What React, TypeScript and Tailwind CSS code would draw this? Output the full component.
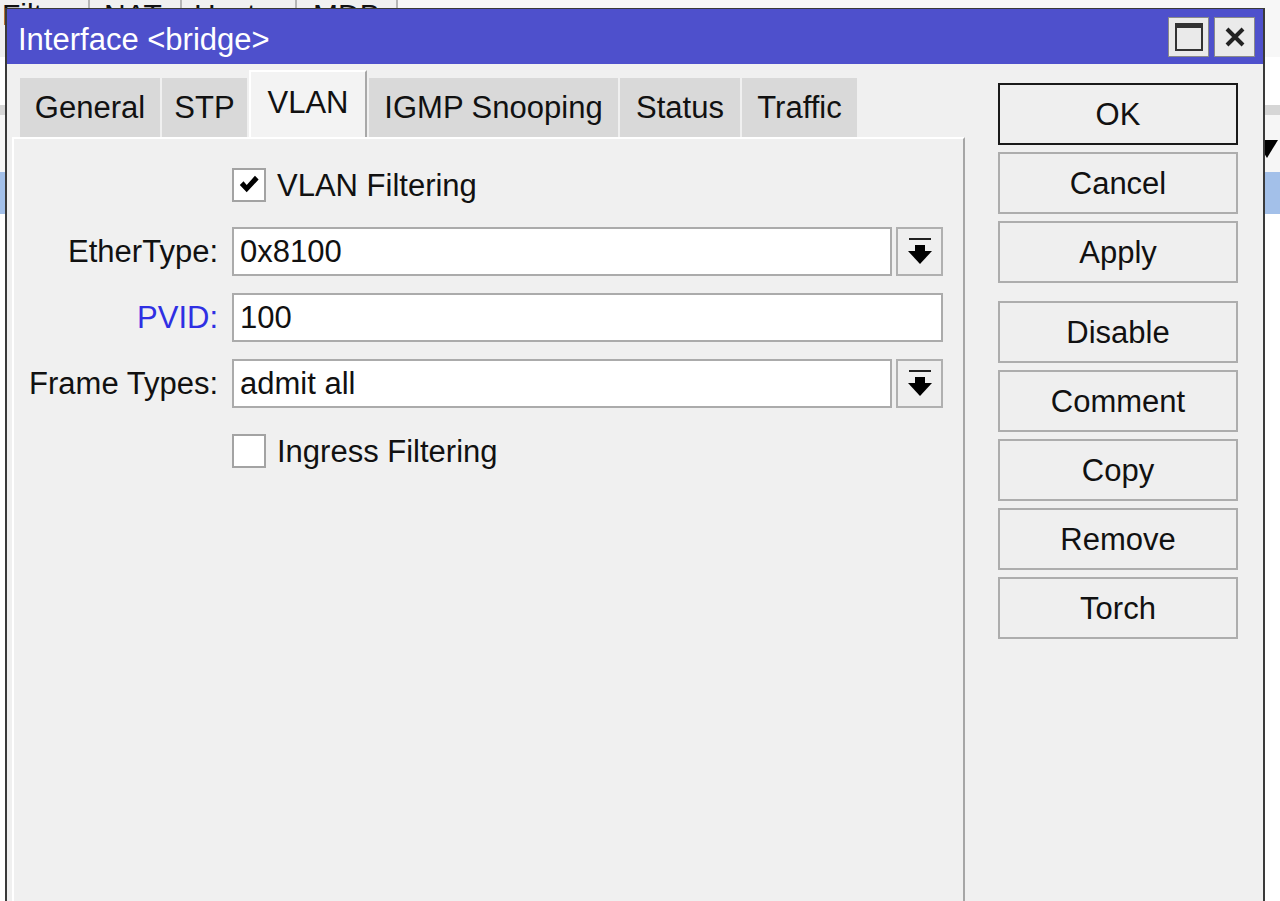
import React from "react";

const tabs = [
  { name: "General", w: "w-[140px]" },
  { name: "STP", w: "w-[85px]" },
  { name: "VLAN", w: "w-[118px]", active: true },
  { name: "IGMP Snooping", w: "w-[249px]" },
  { name: "Status", w: "w-[120px]" },
  { name: "Traffic", w: "w-[115px]" },
];

const actions = ["OK", "Cancel", "Apply", "Disable", "Comment", "Copy", "Remove", "Torch"];

function CheckBox({ checked, label }: { checked?: boolean; label: string }) {
  return (
    <div className="flex items-center pl-[218px] h-[34px]">
      <div className="w-[34px] h-[34px] border-2 border-[#a3a3a3] bg-white flex items-center justify-center">
        {checked && (
          <svg width="22" height="22" viewBox="0 0 24 24">
            <polygon points="2,12 6,8 9.5,12 18.5,2 22.5,6 9.5,20" fill="#000" />
          </svg>
        )}
      </div>
      <span className="ml-[11px] text-[31px] leading-none text-[#111]">{label}</span>
    </div>
  );
}

function DropIcon() {
  return (
    <svg width="24" height="27" viewBox="0 0 24 27">
      <rect x="1" y="0" width="22" height="2" fill="#222" />
      <rect x="7" y="7" width="10" height="7" fill="#000" />
      <polygon points="0,13 24,13 12,26" fill="#000" />
    </svg>
  );
}

function Field({
  label,
  value,
  blue,
  drop,
}: {
  label: string;
  value: string;
  blue?: boolean;
  drop?: boolean;
}) {
  return (
    <div className="flex items-center h-[49px]">
      <span
        className={`w-[204px] text-right text-[31px] leading-none whitespace-nowrap ${
          blue ? "text-[#2f2fe3]" : "text-[#111]"
        }`}
      >
        {label}
      </span>
      <div
        className={`ml-[14px] h-[49px] border-2 border-[#ababab] bg-white flex items-center pl-[6px] text-[31px] leading-none text-[#111] ${
          drop ? "w-[660px]" : "w-[711px]"
        }`}
      >
        {value}
      </div>
      {drop && (
        <div className="ml-[4px] w-[47px] h-[49px] border-2 border-[#b0b0b0] bg-[#efefef] flex items-center justify-center">
          <DropIcon />
        </div>
      )}
    </div>
  );
}

// the Bridge window lying behind the dialog
function Backdrop() {
  return (
    <div className="absolute inset-0 flex flex-col">
      <div className="h-[57px] bg-[#f0f0f0] flex">
        <div className="w-[90px] border-r-2 border-[#b5b5b5] text-[30px] leading-none text-[#111] pl-[2px]">Filters</div>
        <div className="w-[92px] border-r-2 border-[#b5b5b5] text-[30px] leading-none text-[#111] pl-[14px]">NAT</div>
        <div className="w-[115px] border-r-2 border-[#b5b5b5] text-[30px] leading-none text-[#111] pl-[12px]">Hosts</div>
        <div className="w-[101px] border-r-2 border-[#b5b5b5] text-[30px] leading-none text-[#111] pl-[16px]">MDB</div>
        <div className="flex-1 bg-[#f7f7f7]" />
      </div>
      <div className="h-[48px] bg-white" />
      <div className="h-[10px] bg-[#d6d6d6]" />
      <div className="h-[57px] bg-[#f6f6f6] flex justify-end items-start pt-[25px] pr-[2px]">
        <svg width="22" height="18" viewBox="0 0 22 18">
          <polygon points="0,0 22,0 11,18" fill="#000" />
        </svg>
      </div>
      <div className="h-[42px] bg-[#a3c0e9]" />
      <div className="flex-1 bg-white" />
    </div>
  );
}

export default function App() {
  return (
    <div className="relative w-[1280px] h-[901px] overflow-hidden bg-white font-['Liberation_Sans',Arial,sans-serif]">
      <Backdrop />

      <div className="absolute left-[5px] top-[8px] w-[1260px] h-[920px] flex flex-col border-x-2 border-t border-[#3a3a3a] bg-[#f0f0f0]">
        {/* title bar */}
        <div className="h-[55px] bg-[#4e50cc] flex items-center pl-[11px] pr-[8px]">
          <span className="mt-[6px] text-[31px] leading-none text-white">Interface &lt;bridge&gt;</span>
          <div className="ml-auto flex gap-[5px]">
            <div className="w-[41px] h-[40px] bg-[#eaeaea] border border-[#8a8a8a] flex items-center justify-center">
              <div className="w-[28px] h-[28px] border-2 border-t-[5px] border-[#333]" />
            </div>
            <div className="w-[41px] h-[40px] bg-[#eaeaea] border border-[#8a8a8a] flex items-center justify-center">
              <svg width="22" height="22" viewBox="0 0 22 22">
                <path d="M3 3 L19 19 M19 3 L3 19" stroke="#222" strokeWidth="4" />
              </svg>
            </div>
          </div>
        </div>

        <div className="flex-1 flex pl-[5px]">
          {/* tabs + page */}
          <div className="w-[953px] flex flex-col">
            <div className="h-[73px] flex items-end pl-[8px] gap-[2px]">
              {tabs.map((t) =>
                t.active ? (
                  <div
                    key={t.name}
                    className={`${t.w} h-[67px] bg-[#f3f3f3] border-l-2 border-t-2 border-white border-r-2 border-r-[#a8a8a8] flex items-center justify-center pb-[4px] text-[31px] leading-none text-[#111]`}
                  >
                    {t.name}
                  </div>
                ) : (
                  <div
                    key={t.name}
                    className={`${t.w} h-[59px] bg-[#d9d9d9] flex items-center justify-center text-[31px] leading-none text-[#111] whitespace-nowrap`}
                  >
                    {t.name}
                  </div>
                )
              )}
            </div>
            <div className="flex-1 border-l-2 border-t-2 border-white border-r-2 border-r-[#a6a6a6] flex flex-col pt-[29px]">
              <CheckBox checked label="VLAN Filtering" />
              <div className="mt-[25px] flex flex-col gap-[17px]">
                <Field label="EtherType:" value="0x8100" drop />
                <Field label="PVID:" value="100" blue />
                <Field label="Frame Types:" value="admit all" drop />
              </div>
              <div className="mt-[26px]">
                <CheckBox label="Ingress Filtering" />
              </div>
            </div>
          </div>

          {/* action buttons */}
          <div className="ml-[33px] w-[240px] flex flex-col pt-[19px]">
            {actions.map((a, i) => (
              <div
                key={a}
                className={`h-[62px] flex items-center justify-center bg-[#efefef] border-2 text-[31px] leading-none text-[#111] ${
                  i === 0 ? "border-[#1a1a1a]" : "border-[#adadad]"
                } ${i === 0 ? "" : i === 3 ? "mt-[18px]" : "mt-[7px]"}`}
              >
                {a}
              </div>
            ))}
          </div>
        </div>
      </div>
    </div>
  );
}
